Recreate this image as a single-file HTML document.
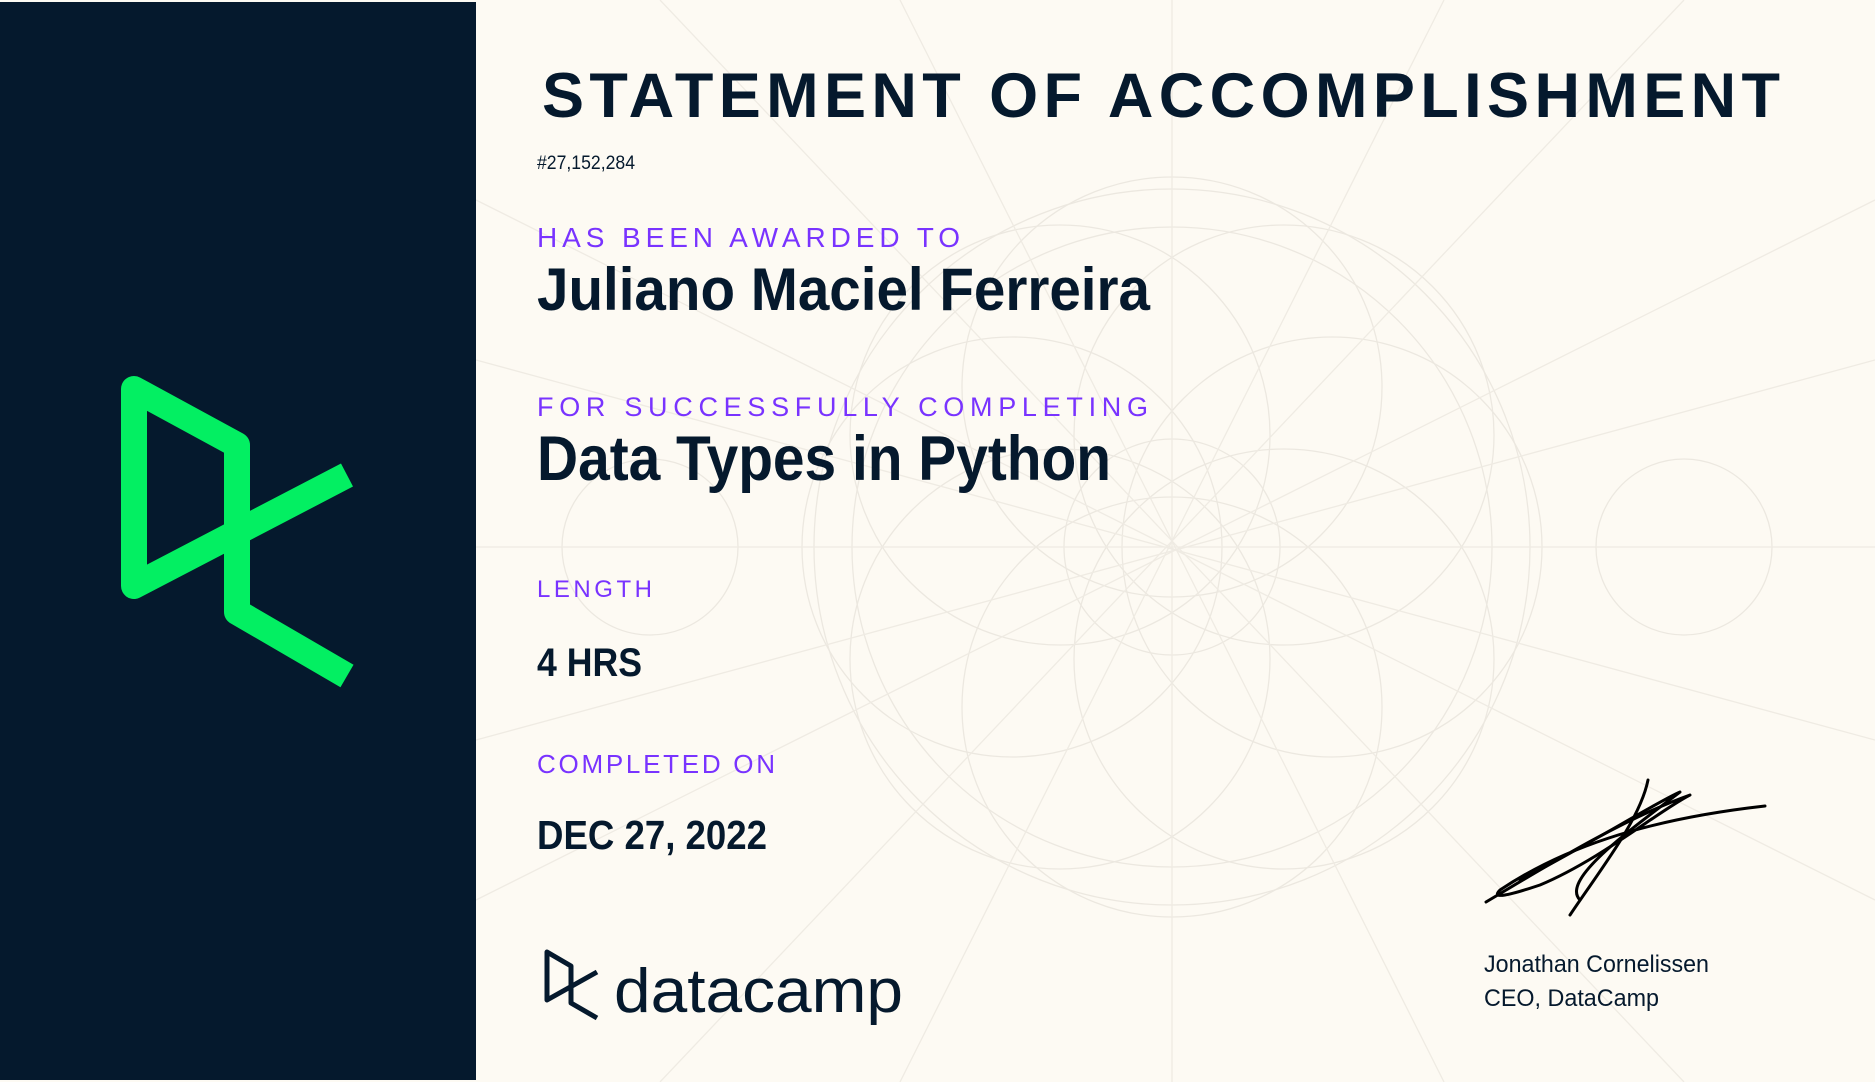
<!DOCTYPE html>
<html><head><meta charset="utf-8"><style>
html,body{margin:0;padding:0;width:1875px;height:1082px;overflow:hidden;background:#fdfaf3;}
svg{position:absolute;left:0;top:0;}
</style></head><body>
<svg width="1875" height="1082" viewBox="0 0 1875 1082" xmlns="http://www.w3.org/2000/svg">
<rect width="1875" height="1082" fill="#fdfaf3"/>
<g fill="none" stroke="#ece8e0" stroke-width="1.3">
<circle cx="1172" cy="547" r="358"/>
<circle cx="1172" cy="547" r="320"/>
<circle cx="1172" cy="547" r="108"/>
<circle cx="1172" cy="387" r="210"/>
<circle cx="1172" cy="707" r="210"/>
<circle cx="1012" cy="547" r="210"/>
<circle cx="1332" cy="547" r="210"/>
<circle cx="1060" cy="435" r="210"/>
<circle cx="1284" cy="659" r="210"/>
<circle cx="1060" cy="659" r="210"/>
<circle cx="1284" cy="435" r="210"/>
<circle cx="650" cy="547" r="88"/>
<circle cx="1684" cy="547" r="88"/>
<g stroke="#efebe3">
<line x1="1172" y1="0" x2="1172" y2="1082"/>
<line x1="476" y1="547" x2="1875" y2="547"/>
<line x1="660" y1="0" x2="1684" y2="1082"/>
<line x1="1684" y1="0" x2="660" y2="1082"/>
<line x1="900" y1="0" x2="1444" y2="1082"/>
<line x1="1444" y1="0" x2="900" y2="1082"/>
<line x1="476" y1="200" x2="1875" y2="900"/>
<line x1="476" y1="900" x2="1875" y2="200"/>
<line x1="476" y1="360" x2="1875" y2="740"/>
<line x1="476" y1="740" x2="1875" y2="360"/>
</g>
</g>
<rect x="0" y="2" width="476" height="1078" fill="#05192d"/>
<g fill="none" stroke="#03ef62" stroke-width="26" stroke-linejoin="round" stroke-linecap="butt">
<polyline points="347,475 134,586 134,389 237,445 237,612 347,676"/>
</g>
<g font-family="Liberation Sans, sans-serif" fill="#05192d">
<text x="542" y="117" font-size="63" font-weight="bold" textLength="1238" lengthAdjust="spacing">STATEMENT OF ACCOMPLISHMENT</text>
<text x="537" y="169" font-size="19" textLength="98" lengthAdjust="spacingAndGlyphs">#27,152,284</text>
<text x="537" y="247" font-size="28" fill="#7933ff" textLength="423" lengthAdjust="spacing">HAS BEEN AWARDED TO</text>
<text x="537" y="310" font-size="60" font-weight="bold" textLength="613" lengthAdjust="spacingAndGlyphs">Juliano Maciel Ferreira</text>
<text x="537" y="416" font-size="27" fill="#7933ff" textLength="611" lengthAdjust="spacing">FOR SUCCESSFULLY COMPLETING</text>
<text x="537" y="480" font-size="63" font-weight="bold" textLength="574" lengthAdjust="spacingAndGlyphs">Data Types in Python</text>
<text x="537" y="597" font-size="24" fill="#7933ff" textLength="115" lengthAdjust="spacing">LENGTH</text>
<text x="537" y="676" font-size="40" font-weight="bold" textLength="105" lengthAdjust="spacingAndGlyphs">4 HRS</text>
<text x="537" y="773" font-size="26" fill="#7933ff" textLength="238" lengthAdjust="spacing">COMPLETED ON</text>
<text x="537" y="849" font-size="41" font-weight="bold" textLength="230" lengthAdjust="spacingAndGlyphs">DEC 27, 2022</text>
<text x="1484" y="972" font-size="24" textLength="225" lengthAdjust="spacingAndGlyphs">Jonathan Cornelissen</text>
<text x="1484" y="1006" font-size="24" textLength="175" lengthAdjust="spacingAndGlyphs">CEO, DataCamp</text>
<text x="614" y="1012" font-size="62" textLength="289" lengthAdjust="spacingAndGlyphs">datacamp</text>
</g>
<g fill="none" stroke="#05192d" stroke-width="5" stroke-linejoin="round">
<polyline points="597,972 547,1000 547,952 571,966 571,1003 597,1018"/>
</g>
<g fill="none" stroke="#000" stroke-width="3" stroke-linecap="round" stroke-linejoin="round">
<path d="M1648 780 C1640 820 1600 870 1570 915"/>
<path d="M1486 902 C1540 870 1620 820 1690 795 C1660 810 1600 860 1540 885 C1510 895 1490 900 1500 890 C1560 850 1640 820 1765 806"/>
<path d="M1520 880 C1580 850 1660 800 1680 792 C1630 830 1560 880 1580 900"/>
</g>
</svg>
</body></html>
